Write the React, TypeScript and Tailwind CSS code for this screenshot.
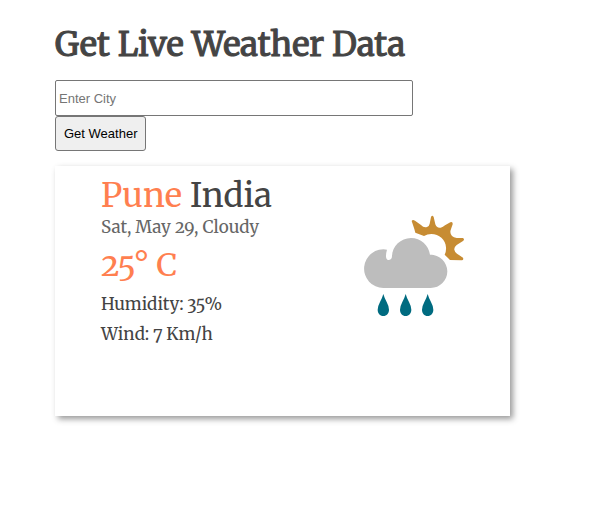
function RainIcon() {
  return (
    <svg viewBox="39 30 306 306" className="h-[102px] w-[102px] shrink-0" role="img" aria-label="Cloudy with rain">
      <path
        d="M185 48Q188 42 195 47L213 60Q221 69 231 66Q237 65 239 56L243 36Q247 29 251 36L256 58Q260 70 272 68Q279 67 285 61L301 52Q309 49 308 58L302 75Q299 86 306 93Q311 98 320 99L339 99Q345 103 339 108L320 120Q312 126 313 134Q314 141 321 146L339 158Q342 166 335 166L300 165L284 149Q289 139 288 127C287 104 267 87 244 87Q232 87 222 93L196 83L193 72Z"
        fill="#c78c33"
      />
      <path
        d="M100 249A58 58 0 1 1 111 134Q108 143 108 155Q109 165 117 165Q126 164 126 153C127 124 152 99 183 99C212 99 236 121 240 149C269 149 292 171 292 199C292 227 270 249 242 249Z"
        fill="#bdbdbd"
      />
      {[100, 167, 233].map((x) => (
        <path
          key={x}
          transform={`translate(${x} 267)`}
          d="M0 0Q3 11 10 24Q17 37 17 47C17 58 10 66 0 66S-17 58 -17 47Q-17 37 -10 24Q-3 11 0 0Z"
          fill="#006b80"
        />
      ))}
    </svg>
  );
}

export default function App() {
  return (
    <main className="ml-[55px] w-3/4 pt-6 pb-10 font-['Merriweather','DejaVu_Serif_Condensed','DejaVu_Serif',serif] text-[#444] oldstyle-nums">
      <h1 className="whitespace-nowrap text-[33px] leading-[42px] font-normal [-webkit-text-stroke:1px_#444]">Get Live Weather Data</h1>
      <form className="mt-[14px] flex flex-col items-start font-['Liberation_Sans',sans-serif] text-[13px]" onSubmit={(e) => e.preventDefault()}>
        <input
          type="text"
          aria-label="City"
          placeholder="Enter City"
          className="h-9 w-[358px] max-w-full rounded-xs border border-[#767676] bg-white px-[3px] placeholder:text-[#757575]"
        />
        <button type="submit" className="h-[35px] rounded-[3px] border border-[#767676] bg-[#efefef] px-2 text-black">
          Get Weather
        </button>
      </form>
      <section className="mt-[15px] flex min-h-[250px] items-start justify-between bg-white pr-[45px] pl-[46px] shadow-[3px_3px_6px_#999]">
        <div className="whitespace-nowrap pt-[9px]">
          <h2 className="text-[33px] leading-[42px]">
            <span className="text-[#ff7f50]">Pune</span> India
          </h2>
          <p className="text-[17px] leading-5 text-[#666]">Sat, May 29, Cloudy</p>
          <p className="mt-2 text-[32px] leading-10 text-[#ff7f50]">25° C</p>
          <p className="mt-1 text-[17px] leading-[30px]">Humidity: 35%</p>
          <p className="text-[17px] leading-[30px]">Wind: 7 Km/h</p>
        </div>
        <div className="pt-[49px]">
          <RainIcon />
        </div>
      </section>
    </main>
  );
}
